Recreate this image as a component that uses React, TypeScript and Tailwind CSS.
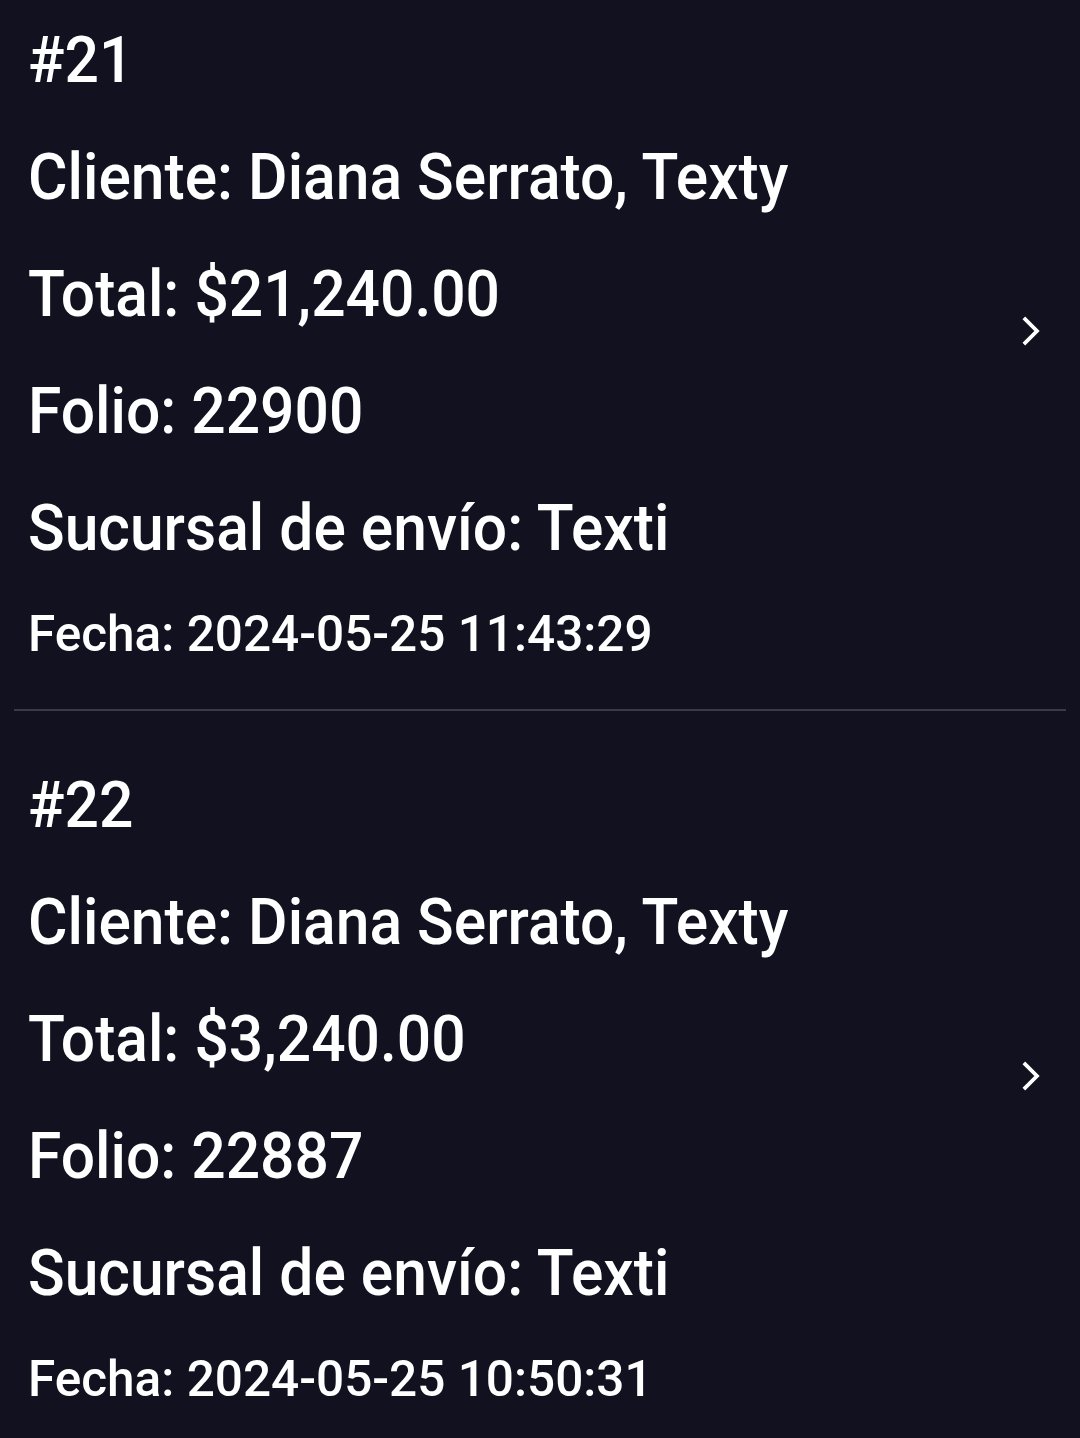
const ORDERS = [
  { id: 21, cliente: 'Diana Serrato, Texty', total: '$21,240.00', folio: '22900', sucursal: 'Texti', fecha: '2024-05-25 11:43:29' },
  { id: 22, cliente: 'Diana Serrato, Texty', total: '$3,240.00', folio: '22887', sucursal: 'Texti', fecha: '2024-05-25 10:50:31' },
];

const Chevron = () => (
  <svg width="58" height="58" viewBox="0 0 24 24" fill="white" className="shrink-0">
    <path d="M10 6 8.9 7.1 13.8 12l-4.9 4.9L10 18l6-6z" />
  </svg>
);

type Order = (typeof ORDERS)[number];

const Line = ({ children }: { children: React.ReactNode }) => (
  <p className="text-[64px] leading-[117px] whitespace-nowrap">
    <span className="inline-block origin-left scale-x-[0.946]">{children}</span>
  </p>
);

const OrderCard = ({ order, first }: { order: Order; first: boolean }) => (
  <div className={`flex items-center justify-between pl-[28px] pr-[21px] pb-[27px] ${first ? 'pt-[2px]' : 'pt-[36px]'}`}>
    <div className="flex flex-col text-white font-medium">
      <Line>#{order.id}</Line>
      <Line>Cliente: {order.cliente}</Line>
      <Line>Total: {order.total}</Line>
      <Line>Folio: {order.folio}</Line>
      <Line>Sucursal de envío: {order.sucursal}</Line>
      <p className="text-[50px] leading-[95px] whitespace-nowrap">
        <span className="inline-block origin-left scale-x-[0.99]">Fecha: {order.fecha}</span>
      </p>
    </div>
    <div className="mb-[22px]">
      <Chevron />
    </div>
  </div>
);

export default function App() {
  return (
    <div className="min-h-[1438px] w-[1080px] bg-[#11111f] overflow-hidden" style={{ fontFamily: 'Roboto, "Noto Sans", sans-serif' }}>
      {ORDERS.map((o, i) => (
        <div key={o.id}>
          {i > 0 && <div className="mx-[14px] h-[2px] bg-[#3a3a48]" />}
          <OrderCard order={o} first={i === 0} />
        </div>
      ))}
    </div>
  );
}
